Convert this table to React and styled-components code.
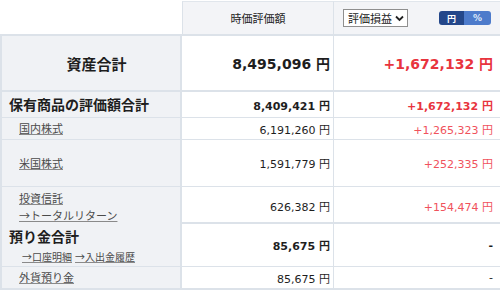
import styled, { createGlobalStyle } from 'styled-components';

const GlobalStyle = createGlobalStyle`
    html, body {
        margin: 0;
        padding: 0;
        background: #FFFFFF;
    }
    body {
        font-family: 'DejaVu Sans', 'Noto Sans CJK JP', sans-serif;
        color: #222222;
    }
`;

const rows = [
    { label: '保有商品の評価額合計', kind: 'group', value: '8,409,421 円', gain: '+1,672,132 円', height: 25, border: 1 },
    { label: '国内株式', kind: 'item', value: '6,191,260 円', gain: '+1,265,323 円', height: 21, border: 1 },
    { label: '米国株式', kind: 'item', value: '1,591,779 円', gain: '+252,335 円', height: 46, border: 1 },
    { label: '投資信託', sub: '→トータルリターン', kind: 'item', value: '626,382 円', gain: '+154,474 円', height: 35, border: 2 },
];

export default function App(){
    return(
        <>
            <GlobalStyle />
            <Pagina>
                <Cabecalho>
                    <Vazio />
                    <CelulaCab>時価評価額</CelulaCab>
                    <CelulaCab $split>
                        <Seletor>
                            評価損益
                            <svg width="9" height="7" viewBox="0 0 9 7">
                                <path d="M1 1.5 L4.5 5 L8 1.5" fill="none" stroke="#222" strokeWidth="1.8" />
                            </svg>
                        </Seletor>
                        <Alternar>
                            <Opcao $ativo>円</Opcao>
                            <Opcao>%</Opcao>
                        </Alternar>
                    </CelulaCab>
                </Cabecalho>

                <Linha $h={54} $borda={2}>
                    <Rotulo $centro>
                        <TituloTotal>資産合計</TituloTotal>
                    </Rotulo>
                    <Valor $grande $forte>8,495,096 円</Valor>
                    <Ganho $grande $forte>+1,672,132 円</Ganho>
                </Linha>

                {rows.map((r) => (
                    <Linha key={r.label} $h={r.height} $borda={r.border}>
                        <Rotulo $topo={!!r.sub}>
                            {r.kind === 'group'
                                ? <TituloGrupo>{r.label}</TituloGrupo>
                                : <LinkItem>{r.label}</LinkItem>}
                            {r.sub && <LinkItem>{r.sub}</LinkItem>}
                        </Rotulo>
                        <Valor $forte={r.kind === 'group'}>{r.value}</Valor>
                        <Ganho $forte={r.kind === 'group'}>{r.gain}</Ganho>
                    </Linha>
                ))}

                <Linha $h={42} $borda={1}>
                    <Rotulo $topo>
                        <TituloGrupo>預り金合計</TituloGrupo>
                        <Links>
                            <LinkPequeno>→口座明細</LinkPequeno>
                            <LinkPequeno>→入出金履歴</LinkPequeno>
                        </Links>
                    </Rotulo>
                    <Valor $forte>85,675 円</Valor>
                    <Traco $forte>-</Traco>
                </Linha>
                <Linha $h={21} $borda={2}>
                    <Rotulo>
                        <LinkItem>外貨預り金</LinkItem>
                    </Rotulo>
                    <Valor>85,675 円</Valor>
                    <Traco>-</Traco>
                </Linha>
            </Pagina>
        </>
    );
};

const Pagina = styled.div`
    width: 500px;
    padding-top: 1px;
`;

const Cabecalho = styled.div`
    display: grid;
    grid-template-columns: 182px 151px 1fr;
    height: 33px;
    border-bottom: 2px solid #DCE2E9;
`;

const Vazio = styled.div`
    background: #FFFFFF;
`;

const CelulaCab = styled.div`
    display: flex;
    align-items: center;
    justify-content: ${(p) => (p.$split ? 'space-between' : 'center')};
    padding: ${(p) => (p.$split ? '0 9px 0 9px' : '0')};
    background: #F3F4F7;
    border-top: 1px solid #E1E6EC;
    border-left: 1px solid #DCE2E9;
    font-family: 'Noto Sans CJK JP', sans-serif;
    font-size: 11px;
    color: #222222;
`;

const Seletor = styled.div`
    display: flex;
    align-items: center;
    gap: 3px;
    box-sizing: border-box;
    width: 65px;
    height: 18px;
    padding: 0 0 0 4px;
    background: #FFFFFF;
    border: 1px solid #8F8F8F;
    font-size: 11px;
    line-height: 16px;
`;

const Alternar = styled.div`
    display: flex;
    height: 14px;
    border-radius: 3px;
    overflow: hidden;
`;

const Opcao = styled.span`
    display: flex;
    align-items: center;
    justify-content: center;
    width: ${(p) => (p.$ativo ? '25px' : '27px')};
    background: ${(p) => (p.$ativo ? '#24478A' : '#4D7BCB')};
    color: ${(p) => (p.$ativo ? '#FFFFFF' : '#DDE8FA')};
    font-family: 'DejaVu Sans', 'Noto Sans CJK JP', sans-serif;
    font-size: 9px;
    font-weight: 700;
`;

const Linha = styled.div`
    display: grid;
    grid-template-columns: 182px 151px 1fr;
    height: ${(p) => p.$h}px;
    border-bottom: ${(p) => p.$borda}px solid #DCE2E9;
`;

const Rotulo = styled.div`
    display: flex;
    flex-direction: column;
    justify-content: ${(p) => (p.$topo ? 'flex-start' : 'center')};
    align-items: ${(p) => (p.$centro ? 'center' : 'flex-start')};
    padding: ${(p) => (p.$topo ? '3px 0 0 7px' : '0 0 0 7px')};
    box-sizing: border-box;
    background: #F0F2F5;
    border-left: 2px solid #DCE2E9;
    border-right: 2px solid #DCE2E9;
    font-family: 'Noto Sans CJK JP', sans-serif;
`;

const TituloTotal = styled.span`
    font-size: 15px;
    font-weight: 700;
    color: #1E1E1E;
    margin-left: 4px;
`;

const TituloGrupo = styled.span`
    font-size: 14px;
    font-weight: 700;
    line-height: 19px;
    color: #1E1E1E;
`;

const LinkItem = styled.a`
    margin-left: 10px;
    font-size: 11px;
    line-height: 17px;
    color: #4A4A4A;
    text-decoration: underline;
    text-decoration-color: #8A8A8A;
`;

const Links = styled.div`
    display: flex;
    gap: 3px;
    margin: 3px 0 0 13px;
`;

const LinkPequeno = styled.a`
    font-size: 10px;
    line-height: 15px;
    color: #4A4A4A;
    text-decoration: underline;
    text-decoration-color: #8A8A8A;
`;

const Valor = styled.div`
    display: flex;
    align-items: center;
    justify-content: flex-end;
    padding-right: 3px;
    font-size: ${(p) => (p.$grande ? '14px' : '11px')};
    font-weight: ${(p) => (p.$forte ? 700 : 400)};
    color: #1E1E1E;
    white-space: nowrap;
`;

const Ganho = styled(Valor)`
    padding-right: 7px;
    border-left: 1px solid #DCE2E9;
    color: ${(p) => (p.$forte ? '#E8343E' : '#F0525C')};
`;

const Traco = styled(Valor)`
    padding-right: 7px;
    border-left: 1px solid #DCE2E9;
`;
